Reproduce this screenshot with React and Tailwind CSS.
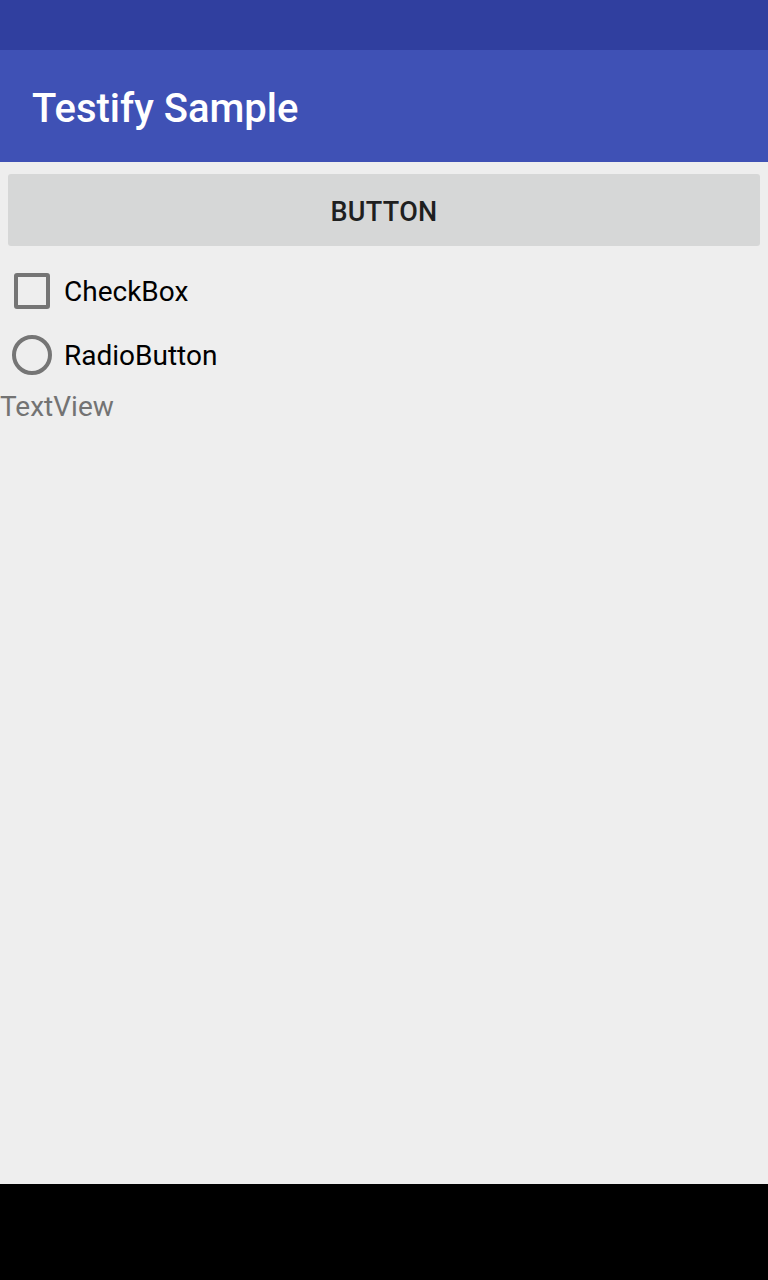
export default function App() {
  return (
    <div className="w-[768px] h-[1280px] flex flex-col bg-[#eeeeee] overflow-hidden" style={{ fontFamily: 'Roboto, "Noto Sans", sans-serif' }}>
      <div className="h-[50px] bg-[#303f9f] shrink-0" />
      <div className="h-[112px] bg-[#3f51b5] shrink-0 flex items-center pl-[32px] pt-[5px]">
        <span className="text-white text-[40px] font-medium leading-none">Testify Sample</span>
      </div>
      <div className="flex-1 flex flex-col">
        <div className="px-[8px] pt-[12px]">
          <div className="h-[72px] bg-[#d6d7d7] rounded-[3px] flex items-center justify-center pt-[4px]">
            <span className="text-[#1f1f1f] text-[27px] font-medium leading-none tracking-[0.3px]">BUTTON</span>
          </div>
        </div>
        <div className="h-[64px] flex items-center mt-[13px]">
          <div className="w-[64px] flex justify-center">
            <div className="w-[36px] h-[36px] border-[4px] border-[#757575] rounded-[3px]" />
          </div>
          <span className="text-black text-[28px] leading-none pt-[2px]">CheckBox</span>
        </div>
        <div className="h-[64px] flex items-center">
          <div className="w-[64px] flex justify-center">
            <div className="w-[40px] h-[40px] border-[4px] border-[#757575] rounded-full" />
          </div>
          <span className="text-black text-[28px] leading-none pt-[2px]">RadioButton</span>
        </div>
        <div className="text-[#737373] text-[28px] leading-[36px] mt-[2px]">TextView</div>
      </div>
      <div className="h-[96px] bg-black shrink-0" />
    </div>
  );
}
